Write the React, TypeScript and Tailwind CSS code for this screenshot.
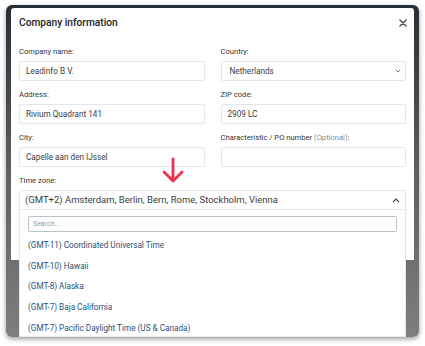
const zones = [
  "(GMT-11) Coordinated Universal Time",
  "(GMT-10) Hawaii",
  "(GMT-8) Alaska",
  "(GMT-7) Baja California",
  "(GMT-7) Pacific Daylight Time (US & Canada)",
];

const Field = ({ label, value, optional }: { label: string; value?: string; optional?: boolean }) => (
  <div className="flex flex-col">
    <label className="h-[12px] text-[7.6px] leading-[12px] text-[#333]">
      {label}
      {optional && <span className="text-[#8c8c8c]"> (Optional)</span>}
      {optional && ":"}
    </label>
    <div className="mt-[3px] flex h-[20px] items-center rounded-[2px] border border-[#e3e6ea] px-[6px] text-[8.2px] text-[#3c3c3c]">
      {value}
    </div>
  </div>
);

export default function App() {
  return (
    <div className="relative h-[346px] w-[425px] overflow-hidden bg-white font-['Roboto',sans-serif]">
      <div className="px-[6px] pt-[5px]">
        {/* window backdrop */}
        <div className="h-[332px] rounded-[6px] bg-gradient-to-b from-[#262f35] via-[#5d6163] to-[#7e7e7e] px-[5px] pt-[3px] shadow-[0_2px_5px_rgba(0,0,0,0.4)]">
          <div className="relative h-[252px] rounded-t-[3px] bg-white px-[8px]">
            <div className="flex h-[22px] items-end justify-between">
              <h2 className="text-[10.2px] font-medium leading-[14px] text-[#222]">Company information</h2>
              <svg width="8" height="8" viewBox="0 0 8 8" className="-mr-[1px] mb-[3px]">
                <path d="M1 1 L7 7 M7 1 L1 7" stroke="#555" strokeWidth="1.6" strokeLinecap="round" />
              </svg>
            </div>

            <div className="mt-[16px] grid grid-cols-2 gap-x-[16px] gap-y-[8px]">
              <Field label="Company name:" value="Leadinfo B.V." />
              <div className="flex flex-col">
                <label className="h-[12px] text-[7.6px] leading-[12px] text-[#333]">Country:</label>
                <div className="mt-[3px] flex h-[20px] items-center justify-between rounded-[2px] border border-[#e3e6ea] pl-[8px] pr-[4px] text-[8.2px] text-[#3c3c3c]">
                  Netherlands
                  <svg width="6" height="4" viewBox="0 0 6 4">
                    <path d="M0.8 0.8 L3 3 L5.2 0.8" fill="none" stroke="#666" strokeWidth="0.9" />
                  </svg>
                </div>
              </div>
              <Field label="Address:" value="Rivium Quadrant 141" />
              <Field label="ZIP code:" value="2909 LC" />
              <Field label="City:" value="Capelle aan den IJssel" />
              <Field label="Characteristic / PO number" optional />
            </div>

            <div className="mt-[8px] flex flex-col">
              <label className="h-[12px] text-[7.6px] leading-[12px] text-[#333]">Time zone:</label>
              <div className="relative mt-[3px]">
                <div className="flex h-[20px] items-center justify-between rounded-t-[2px] border border-[#e3e6ea] pl-[5px] pr-[5px] text-[9.5px] text-[#3c3c3c]">
                  (GMT+2) Amsterdam, Berlin, Bern, Rome, Stockholm, Vienna
                  <svg width="8" height="5" viewBox="0 0 8 5">
                    <path d="M1 4 L4 1 L7 4" fill="none" stroke="#444" strokeWidth="1.1" />
                  </svg>
                </div>
                {/* open dropdown */}
                <div className="absolute left-0 right-0 top-[20px] z-10 h-[127px] border-x border-b border-[#e3e6ea] bg-white px-[8px] pt-[6px]">
                  <div className="flex h-[16px] items-center rounded-[2px] border border-[#b9c2c9] px-[4px] text-[7px] text-[#9a9a9a]">
                    Search...
                  </div>
                  <ul className="mt-[2.5px] flex flex-col">
                    {zones.map((z) => (
                      <li key={z} className="flex h-[20.8px] items-center text-[8.2px] text-[#2b5079]">
                        {z}
                      </li>
                    ))}
                  </ul>
                </div>
              </div>
            </div>
          </div>
        </div>
      </div>

      {/* annotation arrow */}
      <svg className="absolute left-[161px] top-[157px]" width="24" height="28" viewBox="0 0 24 28">
        <path d="M12 2 L12 24 M3 15 L12 24 L21 15" fill="none" stroke="#f2304f" strokeWidth="2.8" strokeLinecap="round" strokeLinejoin="round" />
      </svg>
    </div>
  );
}
